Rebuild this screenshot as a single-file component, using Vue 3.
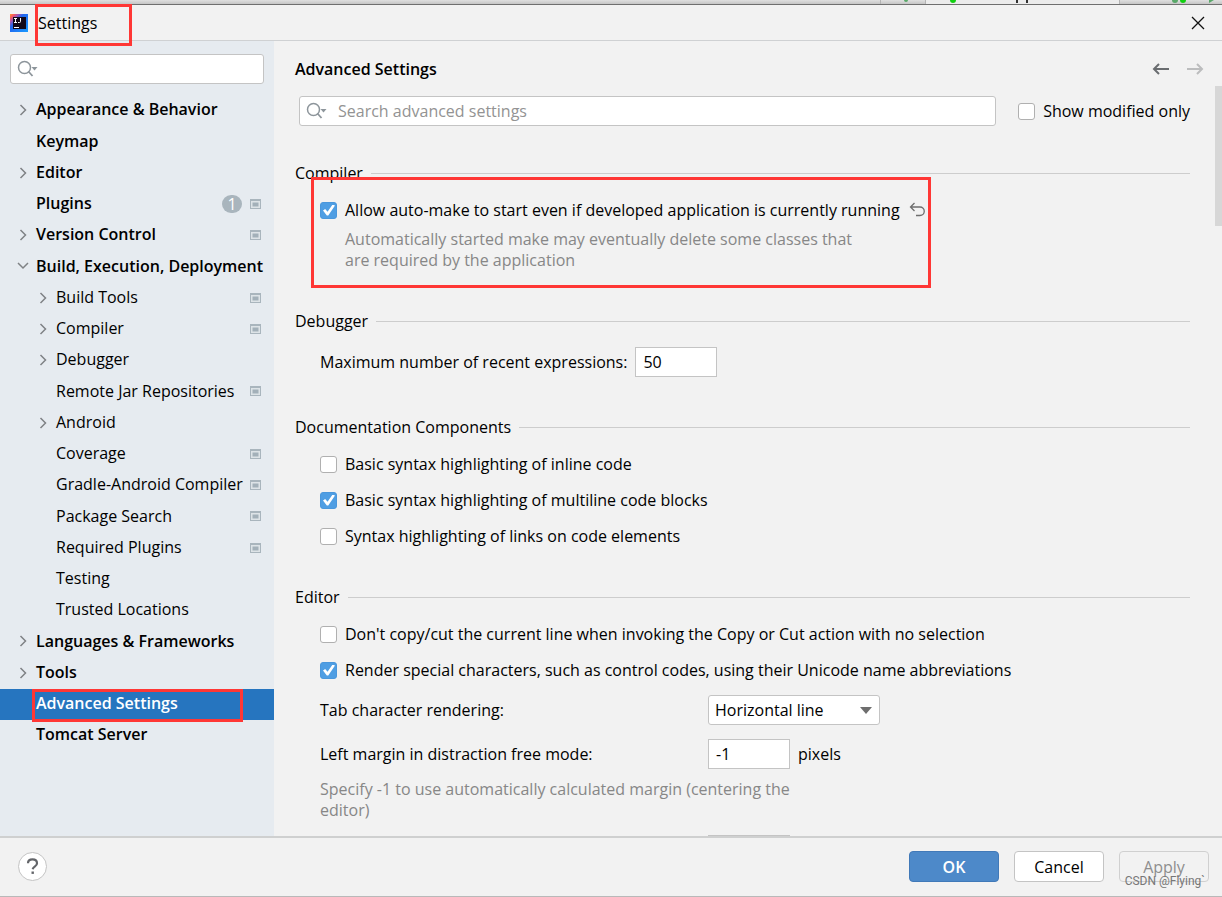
<script setup>
import { ref } from 'vue'

const tree = [
  { label: 'Appearance & Behavior', level: 0, arrow: 'closed' },
  { label: 'Keymap', level: 0 },
  { label: 'Editor', level: 0, arrow: 'closed' },
  { label: 'Plugins', level: 0, count: 1, project: true },
  { label: 'Version Control', level: 0, arrow: 'closed', project: true },
  { label: 'Build, Execution, Deployment', level: 0, arrow: 'open' },
  { label: 'Build Tools', level: 1, arrow: 'closed', project: true },
  { label: 'Compiler', level: 1, arrow: 'closed', project: true },
  { label: 'Debugger', level: 1, arrow: 'closed' },
  { label: 'Remote Jar Repositories', level: 1, project: true },
  { label: 'Android', level: 1, arrow: 'closed' },
  { label: 'Coverage', level: 1, project: true },
  { label: 'Gradle-Android Compiler', level: 1, project: true },
  { label: 'Package Search', level: 1, project: true },
  { label: 'Required Plugins', level: 1, project: true },
  { label: 'Testing', level: 1 },
  { label: 'Trusted Locations', level: 1 },
  { label: 'Languages & Frameworks', level: 0, arrow: 'closed' },
  { label: 'Tools', level: 0, arrow: 'closed' },
  { label: 'Advanced Settings', level: 0, selected: true },
  { label: 'Tomcat Server', level: 0 },
]

const filter = ref('')
const query = ref('')
const modifiedOnly = ref(false)
const autoMake = ref(true)
const recent = ref('50')
const docs = ref([
  { id: 'inline', label: 'Basic syntax highlighting of inline code', on: false },
  { id: 'multiline', label: 'Basic syntax highlighting of multiline code blocks', on: true },
  { id: 'links', label: 'Syntax highlighting of links on code elements', on: false },
])
const editor = ref([
  { id: 'copycut', label: "Don't copy/cut the current line when invoking the Copy or Cut action with no selection", on: false },
  { id: 'special', label: 'Render special characters, such as control codes, using their Unicode name abbreviations', on: true },
])
const tabStyle = ref('Horizontal line')
const margin = ref('-1')
</script>

<template>
  <div class="window">
    <div class="backdrop" aria-hidden="true">
      <svg width="342" height="4" viewBox="0 0 342 4">
        <path d="M45 0h194v4H45z" fill="#ececec" />
        <path d="M0.5 0v4M45.5 0v4M239.5 0v4" stroke="#b4b4b4" />
        <circle cx="26" cy="0" r="2" fill="#59a869" />
        <circle cx="73" cy="0" r="3" fill="#10d010" />
        <path d="M137 0v3M147 0v3" stroke="#333" stroke-width="2" />
        <circle cx="295" cy="0" r="3" fill="#59a869" />
        <circle cx="303" cy="0" r="3" fill="#10d010" />
        <path d="M329 0h5l-5 3z" fill="#59a869" />
      </svg>
    </div>

    <header class="titlebar">
      <svg class="logo" width="18" height="18" viewBox="0 0 18 18" aria-hidden="true">
        <defs>
          <linearGradient id="ij" x1="0" y1="0" x2="1" y2="1">
            <stop offset="0" stop-color="#fda02d" />
            <stop offset="0.12" stop-color="#fb5a5c" />
            <stop offset="0.24" stop-color="#a457b4" />
            <stop offset="0.38" stop-color="#2266ee" />
            <stop offset="1" stop-color="#1a9bff" />
          </linearGradient>
        </defs>
        <path d="M0 0h18v18H0z" fill="url(#ij)" />
        <path d="M3 3h13v12H3z" fill="#120818" />
        <path d="M4 4.500h3M5.500 4.500v4M4 8.500h3M10.500 4v3.500q0 1-1 1H8M4 13.500h5" fill="none" stroke="#fff" stroke-width="1" />
      </svg>
      <span class="title">Settings<i class="mark mark-title"></i></span>
      <button class="close" type="button" aria-label="Close">
        <svg width="14" height="14" viewBox="0 0 14 14"><path d="M1 1l12 12M13 1L1 13" stroke="#111" stroke-width="1.300" /></svg>
      </button>
    </header>

    <div class="body">
      <aside class="sidebar">
        <label class="search">
          <svg width="22" height="18" viewBox="0 0 22 18" aria-hidden="true">
            <circle cx="7.500" cy="7.500" r="6" fill="none" stroke="#8d959b" stroke-width="1.500" />
            <path d="M11.500 11.500L15.500 16" stroke="#8d959b" stroke-width="1.800" />
            <path d="M14.500 7h6l-3 3.500z" fill="#8d959b" />
          </svg>
          <input v-model="filter" type="text" aria-label="Search settings" />
        </label>
        <ul class="tree">
          <li v-for="item in tree" :key="item.label + item.level" :class="['node', 'level' + item.level, { selected: item.selected }]">
            <span class="arrow">
              <svg v-if="item.arrow === 'closed'" width="12" height="12" viewBox="0 0 12 12"><path d="M3.500 1l5 5-5 5" fill="none" stroke="#7f8285" stroke-width="1.500" /></svg>
              <svg v-if="item.arrow === 'open'" width="12" height="12" viewBox="0 0 12 12"><path d="M1 3l5 5 5-5" fill="none" stroke="#7f8285" stroke-width="1.500" /></svg>
            </span>
            <span class="name">{{ item.label }}</span>
            <span v-if="item.count" class="count">{{ item.count }}</span>
            <svg v-if="item.project" class="project" width="11" height="10" viewBox="0 0 11 10" aria-hidden="true">
              <path d="M0 0h11v10H0z" fill="#a9b5bd" />
              <path d="M1 2h9v7H1z" fill="#dde3e7" />
              <path d="M2.500 3.500h6v4h-6z" fill="#a3b0b9" />
            </svg>
            <i v-if="item.selected" class="mark mark-node"></i>
          </li>
        </ul>
      </aside>

      <main class="page">
        <div class="head">
          <h1>Advanced Settings</h1>
          <button type="button" class="nav" aria-label="Back">
            <svg width="18" height="14" viewBox="0 0 18 14"><path d="M17 7H2M7 2L2 7l5 5" fill="none" stroke="#6a6d70" stroke-width="2" /></svg>
          </button>
          <button type="button" class="nav" aria-label="Forward" disabled>
            <svg width="18" height="14" viewBox="0 0 18 14"><path d="M1 7h15M11 2l5 5-5 5" fill="none" stroke="#bcbdbe" stroke-width="2" /></svg>
          </button>
        </div>

        <div class="tools">
          <label class="search wide">
            <svg width="22" height="18" viewBox="0 0 22 18" aria-hidden="true">
              <circle cx="7.500" cy="7.500" r="6" fill="none" stroke="#8d959b" stroke-width="1.500" />
              <path d="M11.500 11.500L15.500 16" stroke="#8d959b" stroke-width="1.800" />
              <path d="M14.500 7h6l-3 3.500z" fill="#8d959b" />
            </svg>
            <input v-model="query" type="text" placeholder="Search advanced settings" aria-label="Search advanced settings" />
          </label>
          <label class="check"><input v-model="modifiedOnly" type="checkbox" />Show modified only</label>
        </div>

        <div class="scroll">
          <section>
            <h2>Compiler</h2>
            <div class="rows">
              <i class="mark mark-option"></i>
              <div class="line">
                <label class="check"><input v-model="autoMake" type="checkbox" />Allow auto-make to start even if developed application is currently running</label>
                <button type="button" class="revert" aria-label="Revert">
                  <svg width="18" height="16" viewBox="0 0 18 16"><path d="M6.500 1L2.500 5l4 4M2.500 5h9.500a4.200 4.200 0 0 1 0 8.500H8" fill="none" stroke="#6e6e6e" stroke-width="1.300" /></svg>
                </button>
              </div>
              <p class="hint nested">Automatically started make may eventually delete some classes that are required by the application</p>
            </div>
          </section>

          <section>
            <h2>Debugger</h2>
            <div class="rows">
              <div class="line">
                <label for="recent">Maximum number of recent expressions:</label>
                <input id="recent" v-model="recent" class="field" type="text" />
              </div>
            </div>
          </section>

          <section>
            <h2>Documentation Components</h2>
            <div class="rows">
              <div v-for="opt in docs" :key="opt.id" class="line">
                <label class="check"><input v-model="opt.on" type="checkbox" />{{ opt.label }}</label>
              </div>
            </div>
          </section>

          <section>
            <h2>Editor</h2>
            <div class="rows">
              <div v-for="opt in editor" :key="opt.id" class="line">
                <label class="check"><input v-model="opt.on" type="checkbox" />{{ opt.label }}</label>
              </div>
              <div class="form">
                <label for="tabs">Tab character rendering:</label>
                <span class="select">
                  <select id="tabs" v-model="tabStyle">
                    <option>Horizontal line</option>
                    <option>Long arrow</option>
                  </select>
                  <svg width="12" height="7" viewBox="0 0 12 7" aria-hidden="true"><path d="M0 0h12L6 7z" fill="#6e6e6e" /></svg>
                </span>
                <label for="margin">Left margin in distraction free mode:</label>
                <span class="line"><input id="margin" v-model="margin" class="field" type="text" />pixels</span>
              </div>
              <p class="hint below">Specify -1 to use automatically calculated margin (centering the editor)</p>
              <div class="form">
                <span></span>
                <input class="field" type="text" aria-label="Next option" />
              </div>
            </div>
          </section>
        </div>
        <div class="thumb"></div>
      </main>
    </div>

    <footer class="footer">
      <button type="button" class="help" aria-label="Help">
        <svg width="13" height="17" viewBox="0 0 13 17"><path d="M2 5.200Q2 1.400 6.500 1.400T11 5.200Q11 7 9 8.300T6.700 11.300" fill="none" stroke="#636569" stroke-width="2.200" /><path d="M5.500 13.500h2.400v2.400H5.500z" fill="#636569" /></svg>
      </button>
      <button type="button" class="btn primary">OK</button>
      <button type="button" class="btn">Cancel</button>
      <button type="button" class="btn" disabled>Apply</button>
      <span class="watermark">CSDN @Flying`</span>
    </footer>
  </div>
</template>

<style>
body {
  margin: 0;
}
</style>

<style scoped>
.window {
  display: flex;
  flex-direction: column;
  box-sizing: border-box;
  height: 100vh;
  overflow: hidden;
  border-bottom: 1px solid #b9b9b9;
  background: #f2f2f2;
  color: #000;
  font: 16px/21px "Open Sans", "Noto Sans", sans-serif;
}
.window *,
.window *::before {
  box-sizing: border-box;
}
button,
input,
select {
  margin: 0;
  padding: 0;
  border: 0;
  background: none;
  color: inherit;
  font: inherit;
}
svg {
  display: block;
  flex: none;
}
.mark {
  position: absolute;
  border: 3px solid #ff3735;
  pointer-events: none;
  z-index: 2;
}
.backdrop {
  display: flex;
  flex: none;
  justify-content: flex-end;
  height: 5px;
  border-bottom: 1px solid #6f6f6f;
  background: linear-gradient(#e0e0e0, #c6c6c6);
}
.titlebar {
  display: flex;
  flex: none;
  align-items: center;
  height: 36px;
  padding: 0 17px 0 10px;
  border-bottom: 1px solid #cfd1d3;
}
.title {
  position: relative;
  flex: 1;
  margin-left: 10px;
  padding-top: 2px;
}
.mark-title {
  top: -7px;
  left: -3px;
  width: 97px;
  height: 42px;
}
.body {
  display: flex;
  flex: 1;
  min-height: 0;
}
.sidebar {
  flex: none;
  width: 274px;
  padding-top: 13px;
  background: #e6ebf0;
}
.search {
  display: flex;
  align-items: center;
  height: 30px;
  margin: 0 10px;
  padding-left: 6px;
  border: 1px solid #c4c4c4;
  border-radius: 3px;
  background: #fff;
}
.search input {
  flex: 1;
  min-width: 0;
  padding-left: 10px;
  outline: 0;
}
.search input::placeholder {
  color: #939393;
  opacity: 1;
}
.tree {
  margin: 11px 0 0;
  padding: 0;
  list-style: none;
}
.node {
  position: relative;
  display: flex;
  align-items: center;
  height: 31px;
  padding: 0 13px 2px 17px;
}
.node:nth-child(4n + 2) {
  height: 32px;
}
.level0 {
  font-weight: 600;
}
.level1 {
  padding-left: 37px;
}
.selected {
  background: #2675bf;
  color: #fff;
}
.arrow {
  flex: none;
  width: 19px;
}
.name {
  flex: 1;
  min-width: 0;
  white-space: nowrap;
}
.count {
  width: 20px;
  margin-right: 8px;
  border-radius: 10px;
  background: #a9b5bd;
  color: #fff;
  font-weight: 400;
  line-height: 18px;
  text-align: center;
}
.mark-node {
  top: 0;
  left: 32px;
  width: 211px;
  height: 33px;
}
.page {
  position: relative;
  display: flex;
  flex: 1;
  flex-direction: column;
  min-width: 0;
}
.head {
  display: flex;
  flex: none;
  gap: 16px;
  align-items: center;
  padding: 16px 18px 16px 21px;
}
h1,
h2 {
  margin: 0;
  font-size: 16px;
}
h1 {
  flex: 1;
  padding-top: 2px;
  font-weight: 600;
}
.tools {
  display: flex;
  flex: none;
  align-items: center;
  padding-right: 32px;
}
.wide {
  flex: 1;
  margin: 0 22px 0 25px;
}
.check {
  display: flex;
  gap: 8px;
  align-items: center;
  white-space: nowrap;
}
.check input {
  position: relative;
  width: 17px;
  height: 17px;
  border: 1px solid #b0b0b0;
  border-radius: 3px;
  background: #fff;
  appearance: none;
}
.check input:checked {
  border-color: #4a97dc;
  background: #4f9ee3;
}
.check input:checked::before {
  position: absolute;
  top: 2px;
  left: 2px;
  width: 12px;
  height: 11px;
  background: #fff;
  clip-path: polygon(0 54%, 18% 42%, 38% 66%, 80% 0, 100% 8%, 44% 100%, 32% 100%);
  content: "";
}
.scroll {
  flex: 1;
  min-height: 0;
  padding: 37px 32px 0 21px;
  overflow: hidden;
}
.thumb {
  position: absolute;
  top: 45px;
  right: 0;
  width: 7px;
  height: 140px;
  background: #d7d7d7;
}
h2 {
  display: flex;
  gap: 8px;
  align-items: center;
  font-weight: 400;
}
h2::after {
  flex: 1;
  height: 1px;
  background: #cdcdcd;
  content: "";
}
.rows {
  position: relative;
  display: flex;
  flex-direction: column;
  gap: 14px;
  padding: 15px 0 40px 25px;
}
.line {
  display: flex;
  gap: 8px;
  align-items: center;
  min-height: 22px;
}
.mark-option {
  top: -7px;
  left: 16px;
  width: 620px;
  height: 111px;
}
.hint {
  max-width: 512px;
  margin: 0;
  color: #878787;
}
.nested {
  margin: -6px 0 0 25px;
}
.below {
  margin-top: -4px;
}
.field {
  width: 82px;
  height: 30px;
  padding-left: 7px;
  border: 1px solid #c4c4c4;
  background: #fff;
}
.form {
  display: grid;
  grid-template-columns: 380px 1fr;
  gap: 14px 8px;
  align-items: center;
}
.select {
  position: relative;
  width: 172px;
}
.select select {
  display: block;
  width: 100%;
  height: 30px;
  padding-left: 6px;
  border: 1px solid #c4c4c4;
  border-radius: 3px;
  background: #fff;
  appearance: none;
}
.select svg {
  position: absolute;
  top: 12px;
  right: 8px;
  pointer-events: none;
}
.footer {
  position: relative;
  display: flex;
  flex: none;
  gap: 15px;
  align-items: center;
  height: 60px;
  padding: 0 13px 1px 18px;
  border-top: 2px solid #cfd0d0;
}
.help {
  display: grid;
  place-items: center;
  width: 29px;
  height: 29px;
  margin-right: auto;
  border: 1px solid #c4c4c4;
  border-radius: 50%;
  background: #fff;
}
.btn {
  width: 90px;
  height: 31px;
  padding-top: 1px;
  border: 1px solid #c4c4c4;
  border-radius: 4px;
  background: #fff;
}
.primary {
  border-color: #4179b8;
  background: #4d89c9;
  color: #fff;
  font-weight: 600;
}
.btn:disabled {
  border-color: #d0d0d0;
  background: none;
  color: #8e8e8e;
}
.watermark {
  position: absolute;
  right: 17px;
  bottom: 5px;
  color: #777;
  font: 12px/20px Roboto, "Liberation Sans", sans-serif;
}
</style>
